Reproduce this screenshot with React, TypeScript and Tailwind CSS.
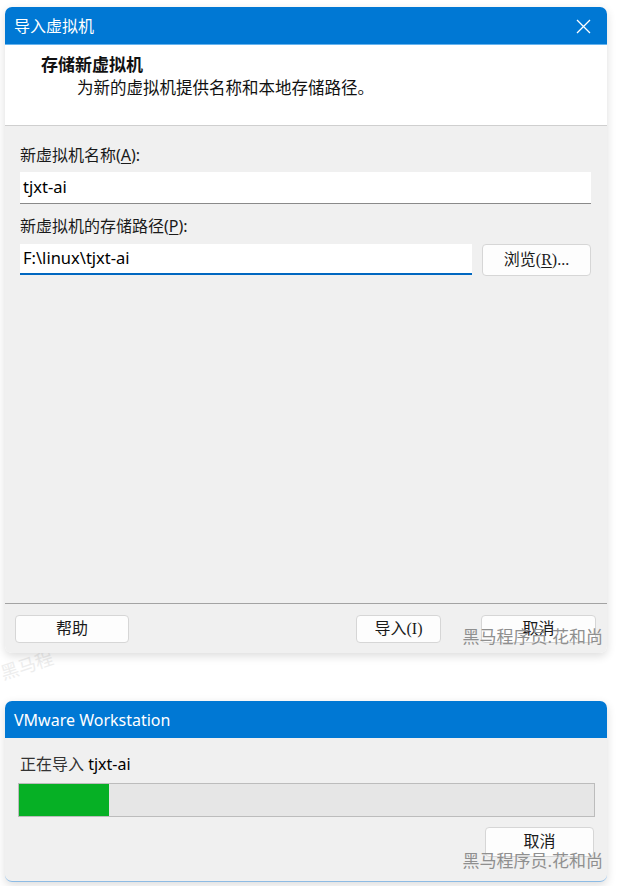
import React from 'react';

const sans = '"Segoe UI", "Noto Sans", "Noto Sans CJK SC", sans-serif';
const serif = '"Liberation Serif", "Noto Sans CJK SC", serif';

function Watermark({ className }: { className: string }) {
  return (
    <span
      className={`pointer-events-none absolute text-[17px] leading-none text-[#8f8f8f] ${className}`}
      style={{ fontFamily: sans }}
    >
      黑马程序员.花和尚
    </span>
  );
}

function Button({ children, className }: { children: React.ReactNode; className: string }) {
  return (
    <button
      className={`flex items-center justify-center rounded-[4px] border border-[#d6d6d6] bg-[#fdfdfd] text-[16px] text-[#1a1a1a] ${className}`}
      style={{ fontFamily: serif }}
    >
      {children}
    </button>
  );
}

function TitleBar({ title, close }: { title: string; close?: boolean }) {
  return (
    <div
      className={`flex items-center justify-between rounded-t-[7px] bg-[#0078d4] pl-[9px] pr-[16px] text-[16px] text-white ${
        close ? 'h-[38px] border-b border-[#66b3ee]' : 'h-[37px]'
      }`}
      style={{ fontFamily: sans }}
    >
      <span>{title}</span>
      {close && (
        <svg width="15" height="15" viewBox="0 0 15 15" className="mt-[1px]">
          <path d="M1 1 L14 14 M14 1 L1 14" stroke="white" strokeWidth="1.3" />
        </svg>
      )}
    </div>
  );
}

export default function App() {
  return (
    <div className="relative h-[886px] w-[619px] overflow-hidden bg-white pl-[5px] pt-[7px]" style={{ fontFamily: sans }}>
      <span className="absolute left-[0px] top-[652px] rotate-[-18deg] text-[18px] text-[#ededed]">黑马程</span>

      {/* import dialog */}
      <div className="relative flex h-[646px] w-[602px] flex-col rounded-[7px] shadow-[0_3px_10px_rgba(0,0,0,0.14)]">
        <TitleBar title="导入虚拟机" close />
        <div className="h-[81px] border-b border-[#cfcfcf] bg-white pt-[9px] leading-[23px] text-[#111]" style={{ fontFamily: serif }}>
          <div className="pl-[36px] text-[17px] font-bold">存储新虚拟机</div>
          <div className="pl-[72px] text-[16.5px]">为新的虚拟机提供名称和本地存储路径。</div>
        </div>

        <div className="flex-1 bg-[#f0f0f0] pl-[15px] pr-[16px] pt-[18px] text-[16px] text-[#1a1a1a]">
          <div className="leading-[22px]">
            新虚拟机名称(<span className="underline underline-offset-2">A</span>):
          </div>
          <div className="mt-[6px] flex h-[32px] items-center border-b border-[#8a8a8a] bg-white pl-[3px] text-[16.5px] text-black">
            tjxt-ai
          </div>
          <div className="mt-[11px] leading-[22px]">
            新虚拟机的存储路径(<span className="underline underline-offset-2">P</span>):
          </div>
          <div className="mt-[7px] flex items-start gap-[10px]">
            <div className="flex h-[31px] w-[452px] items-center border-b-2 border-[#0067c0] bg-white pl-[3px] text-[16.5px] text-black">
              F:\linux\tjxt-ai
            </div>
            <Button className="h-[32px] w-[109px] border-[#4a9ee6]">
              浏览(<span className="underline underline-offset-2">R</span>)...
            </Button>
          </div>
        </div>

        <div className="relative flex h-[50px] items-start rounded-b-[7px] border-t border-[#a3a3a3] bg-[#f0f0f0] pl-[10px] pr-[11px] pt-[11px]">
          <Button className="h-[28px] w-[114px]">帮助</Button>
          <div className="flex-1" />
          <Button className="h-[28px] w-[85px]">导入(I)</Button>
          <Button className="ml-[40px] h-[28px] w-[115px]">取消</Button>
          <Watermark className="right-[4px] top-[24px]" />
        </div>
      </div>

      {/* progress dialog */}
      <div className="relative mt-[48px] flex h-[181px] w-[602px] flex-col rounded-[7px] shadow-[0_3px_10px_rgba(0,0,0,0.14)]">
        <TitleBar title="VMware Workstation" />
        <div className="relative flex-1 rounded-b-[7px] border-b border-[#8dbbe4] bg-[#f0f0f0] pl-[13px] pr-[12px] pt-[15px] text-[16px]">
          <div className="pl-[2px] leading-[22px] text-[#333]">
            正在导入 <span className="text-black">tjxt-ai</span>
          </div>
          <div className="mt-[8px] h-[34px] border border-[#bcbcbc] bg-[#e6e6e6]">
            <div className="h-full w-[90px] bg-[#06b025]" />
          </div>
          <div className="mt-[10px] flex justify-end pr-[1px]">
            <Button className="h-[30px] w-[109px]">取消</Button>
          </div>
          <Watermark className="right-[4px] bottom-[12px]" />
        </div>
      </div>
    </div>
  );
}
